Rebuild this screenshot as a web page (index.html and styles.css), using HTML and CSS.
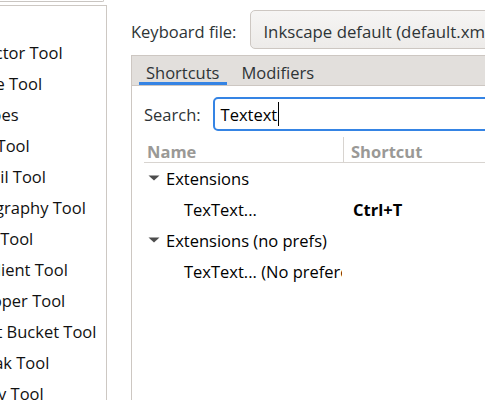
FILE: index.html
```html
<!DOCTYPE html>
<html>
<head>
<meta charset="utf-8">
<link rel="stylesheet" href="styles.css">
</head>
<body>
<div class="window">
  <aside class="sidebar">
    <div class="filter-stub"></div>
    <ul class="pref-tree">
      <li class="group">Tools</li>
      <li>Selector Tool</li>
      <li>Node Tool</li>
      <li>Shapes</li>
      <li>Pen Tool</li>
      <li>Pencil Tool</li>
      <li>Calligraphy Tool</li>
      <li>Text Tool</li>
      <li>Gradient Tool</li>
      <li>Dropper Tool</li>
      <li>Paint Bucket Tool</li>
      <li>Tweak Tool</li>
      <li>Spray Tool</li>
    </ul>
  </aside>
  <main class="main">
    <div class="file-row">
      <span class="label">Keyboard file:</span>
      <div class="combo">Inkscape default (default.xml)</div>
    </div>
    <div class="notebook">
      <div class="tabs">
        <span class="tab active">Shortcuts</span>
        <span class="tab">Modifiers</span>
      </div>
      <div class="page">
        <div class="search-row">
          <span class="search-label">Search:</span>
          <div class="entry"><span>Textext</span><span class="caret"></span></div>
        </div>
        <div class="tree">
          <div class="tree-head">
            <div class="head-name">Name</div>
            <div class="head-key">Shortcut</div>
          </div>
          <div class="row parent">
            <div class="cell-name"><svg class="expander" width="12" height="6" viewBox="0 0 12 6"><path d="M0.5 0.5H11.5L6 5.5Z" fill="#4d4d4d"/></svg>Extensions</div>
            <div class="cell-key"></div>
          </div>
          <div class="row child">
            <div class="cell-name">TexText...</div>
            <div class="cell-key">Ctrl+T</div>
          </div>
          <div class="row parent">
            <div class="cell-name"><svg class="expander" width="12" height="6" viewBox="0 0 12 6"><path d="M0.5 0.5H11.5L6 5.5Z" fill="#4d4d4d"/></svg>Extensions (no prefs)</div>
            <div class="cell-key"></div>
          </div>
          <div class="row child">
            <div class="cell-name">TexText... (No preferences)</div>
            <div class="cell-key"></div>
          </div>
        </div>
      </div>
    </div>
  </main>
</div>
</body>
</html>
```

FILE: styles.css
```css
* {
  box-sizing: border-box;
  margin: 0;
  padding: 0;
}

body {
  width: 485px;
  height: 400px;
  overflow: hidden;
  background: #ffffff;
  font-family: "Open Sans", "Noto Sans", sans-serif;
  font-size: 16.5px;
  color: #2e3436;
}

.window {
  display: flex;
  height: 400px;
}

/* left preferences tree */
.sidebar {
  width: 107px;
  flex: none;
  display: flex;
  flex-direction: column;
}

.filter-stub {
  width: 104px;
  height: 2px;
  border-bottom: 1px solid #c9c5c1;
  border-right: 1px solid #c9c5c1;
  border-bottom-right-radius: 4px;
}

.pref-tree {
  list-style: none;
  margin-top: 3px;
  flex: 1;
  overflow: hidden;
  border-top: 1px solid #cdc8c3;
  border-right: 1px solid #cdc8c3;
  background: #ffffff;
}

.pref-tree li {
  height: 31px;
  line-height: 31px;
  white-space: nowrap;
  margin-left: -37px;
  color: #111111;
}

.pref-tree li.group {
  margin-left: -70px;
}

/* right side */
.main {
  flex: 1;
  min-width: 0;
  padding-left: 24px;
  display: flex;
  flex-direction: column;
}

.file-row {
  display: flex;
  align-items: center;
  gap: 14px;
  margin-top: 10px;
  height: 39px;
  flex: none;
}

.label {
  flex: none;
  padding-top: 3px;
}

.combo {
  flex: none;
  width: 320px;
  height: 39px;
  padding: 3px 0 0 12px;
  display: flex;
  align-items: center;
  border: 1px solid #cdc7c2;
  border-radius: 5px;
  background: linear-gradient(#f6f5f4, #edebe9);
  white-space: nowrap;
  font-size: 16.8px;
}

.notebook {
  flex: 1;
  width: 420px;
  margin-top: 6px;
  border-left: 1px solid #cdc7c2;
  border-top: 1px solid #cdc7c2;
}

.tabs {
  display: flex;
  gap: 8px;
  height: 30px;
  padding-left: 7px;
  background: #e2dfdc;
  border-bottom: 1px solid #cdc7c2;
}

.tab {
  display: flex;
  align-items: center;
  padding: 6px 7px 0;
  border-bottom: 3px solid transparent;
}

.tab.active {
  border-bottom-color: #3584e4;
}

.page {
  padding-left: 12px;
  padding-top: 11px;
}

.search-row {
  display: flex;
  align-items: center;
  gap: 12px;
}

.search-label {
  flex: none;
}

.entry {
  flex: none;
  width: 320px;
  height: 34px;
  display: flex;
  align-items: center;
  padding-left: 6px;
  border: 2px solid #3584e4;
  border-radius: 5px;
  color: #000000;
}

.caret {
  width: 1px;
  height: 24px;
  margin-left: 1px;
  background: #000000;
}

.tree {
  margin-top: 6px;
}

.tree-head {
  display: flex;
  height: 26px;
  border-bottom: 1px solid #d8d4d0;
  font-weight: 700;
  color: #9a9996;
}

.head-name {
  width: 200px;
  padding: 3px 0 0 3px;
  border-right: 1px solid #d8d4d0;
  display: flex;
  align-items: center;
}

.head-key {
  padding: 3px 0 0 7px;
  display: flex;
  align-items: center;
}

.row {
  display: grid;
  grid-template-columns: 198px auto;
  height: 31px;
  color: #000000;
}

.cell-name {
  display: flex;
  align-items: center;
  overflow: hidden;
  white-space: nowrap;
}

.parent .cell-name {
  padding-left: 4px;
}

.child .cell-name {
  padding-left: 40px;
}

.expander {
  flex: none;
  margin-right: 6px;
  margin-top: -1px;
}

.cell-key {
  display: flex;
  align-items: center;
  padding-left: 11px;
  font-weight: 700;
}
```
